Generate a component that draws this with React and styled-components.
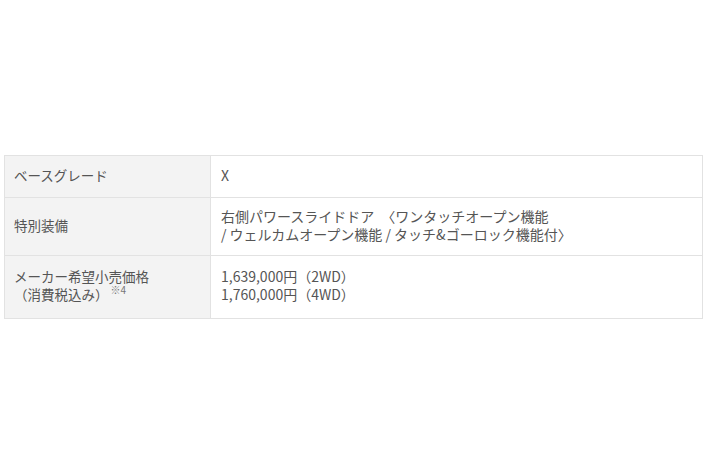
import React from 'react';
import styled, { createGlobalStyle } from 'styled-components';

const GlobalStyle = createGlobalStyle`
  body {
    margin: 0;
    background: #ffffff;
    font-family: "Noto Sans CJK JP", "Liberation Sans", sans-serif;
  }
`;

const Page = styled.div`
  padding: 155px 7px 0 4px;
`;

const SpecTable = styled.table`
  width: 699px;
  border-collapse: collapse;
  border: 1px solid #e2e2e2;
  line-height: 18px;
  color: #555555;
`;

const Label = styled.th`
  width: 187px;
  padding: ${p => p.$pad || '9px 9px 12px'};
  background: #f3f3f3;
  border: 1px solid #e2e2e2;
  font-size: 13.5px;
  font-weight: 400;
  text-align: left;
  vertical-align: ${p => (p.$top ? 'top' : 'middle')};
`;

const Value = styled.td`
  padding: ${p => p.$pad || '9px 10px 12px'};
  border: 1px solid #e2e2e2;
  font-size: 14px;
  vertical-align: top;
`;

const Note = styled.span`
  display: inline-block;
  font-size: 10px;
  line-height: 10px;
  vertical-align: top;
  margin-left: 2px;
  color: #777777;
`;

export default function App() {
  return (
    <>
      <GlobalStyle />
      <Page>
        <SpecTable>
          <tbody>
            <tr>
              <Label $pad="10px 9px 13px">ベースグレード</Label>
              <Value $pad="10px 10px 13px">X</Value>
            </tr>
            <tr>
              <Label>特別装備</Label>
              <Value>
                右側パワースライドドア　〈ワンタッチオープン機能
                <br />/ ウェルカムオープン機能 / タッチ&amp;ゴーロック機能付〉
              </Value>
            </tr>
            <tr>
              <Label $top $pad="11px 9px 15px">
                メーカー希望小売価格
                <br />（消費税込み）<Note>※4</Note>
              </Label>
              <Value $pad="11px 10px 15px">
                1,639,000円（2WD）
                <br />1,760,000円（4WD）
              </Value>
            </tr>
          </tbody>
        </SpecTable>
      </Page>
    </>
  );
}
